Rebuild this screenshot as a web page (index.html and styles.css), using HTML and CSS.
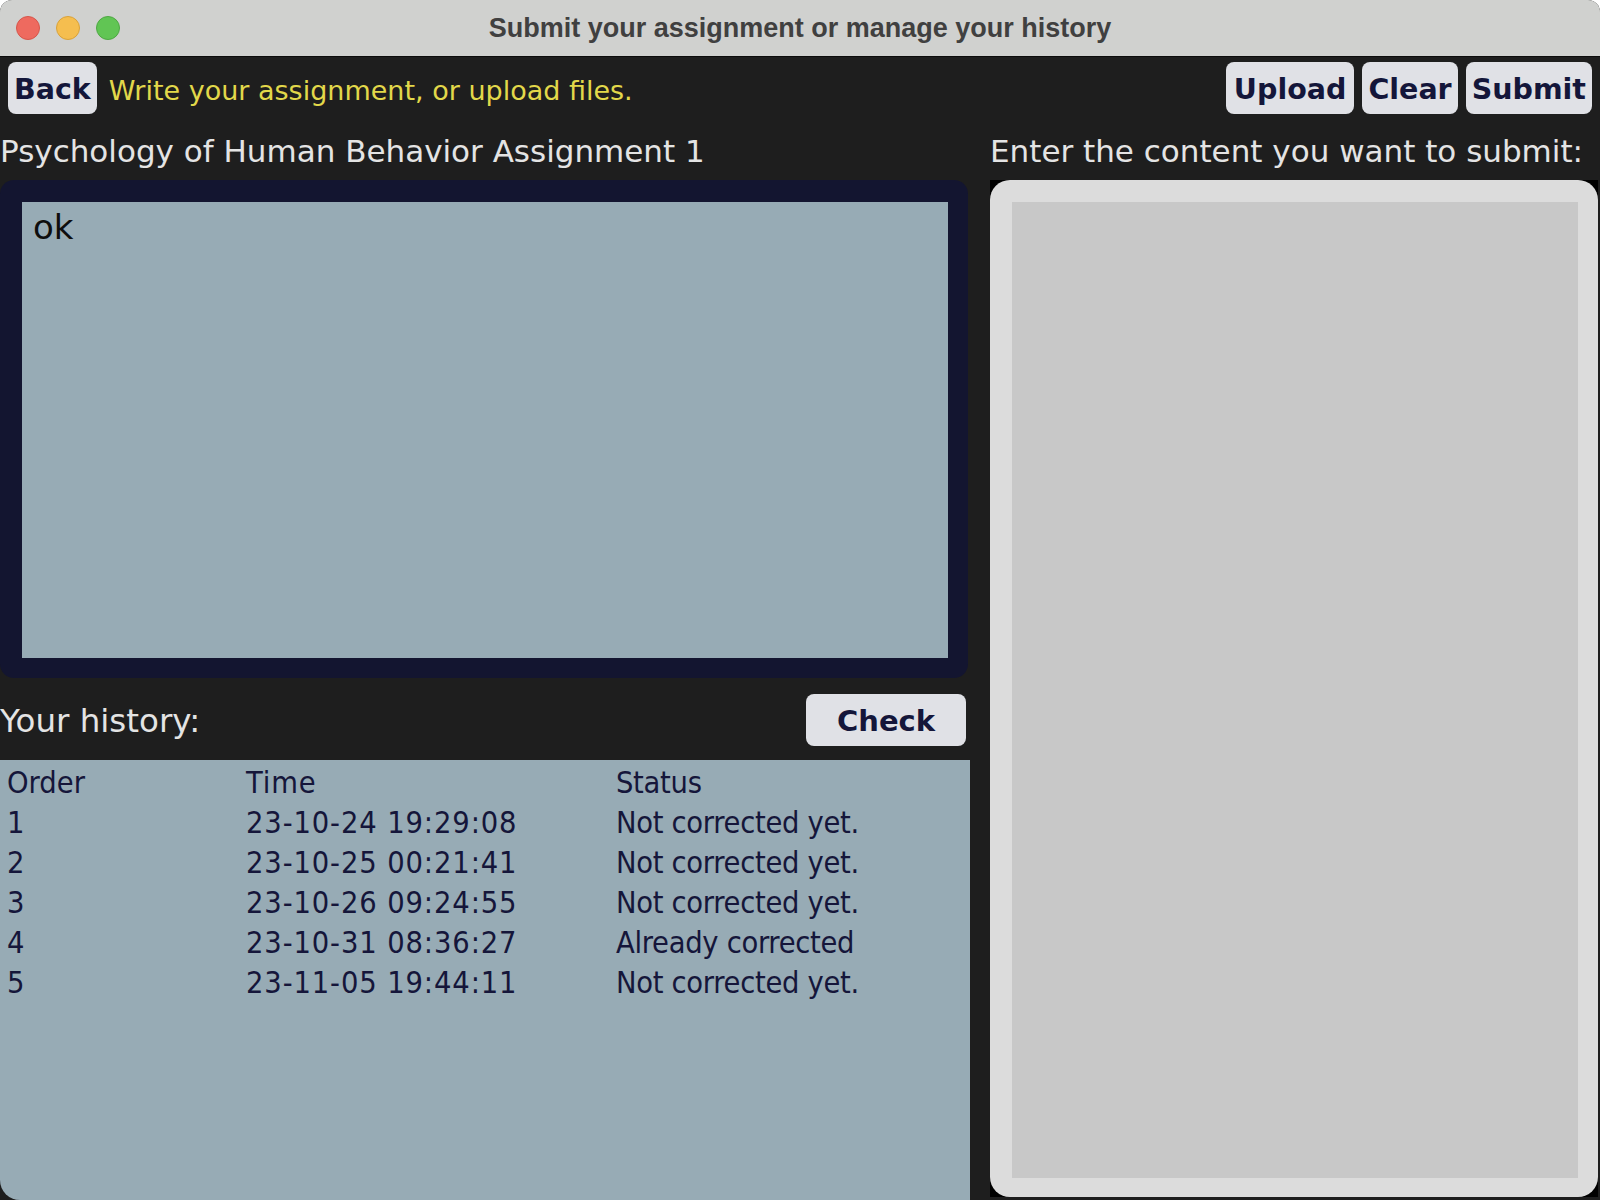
FILE: index.html
```html
<!DOCTYPE html>
<html>
<head>
<meta charset="utf-8">
<title>Submit your assignment or manage your history</title>
<link rel="stylesheet" href="styles.css">
</head>
<body>
<div class="window">
  <div class="titlebar">
    <div class="lights">
      <span class="light red"></span>
      <span class="light yellow"></span>
      <span class="light green"></span>
    </div>
    <div class="title">Submit your assignment or manage your history</div>
    <div></div>
  </div>
  <div class="toolbar">
    <button class="btn">Back</button>
    <span class="hint">Write your assignment, or upload files.</span>
    <div class="actions">
      <button class="btn upload">Upload</button>
      <button class="btn">Clear</button>
      <button class="btn">Submit</button>
    </div>
  </div>
  <div class="main">
    <div class="left">
      <div class="label">Psychology of Human Behavior Assignment 1</div>
      <div class="assignment"><div class="assignment-inner">ok</div></div>
      <div class="history-head">
        <span class="label history-label">Your history:</span>
        <button class="btn check">Check</button>
      </div>
      <div class="history">
        <div class="row"><span>Order</span><span class="time">Time</span><span class="status">Status</span></div>
        <div class="row"><span>1</span><span class="time">23-10-24 19:29:08</span><span class="status">Not corrected yet.</span></div>
        <div class="row"><span>2</span><span class="time">23-10-25 00:21:41</span><span class="status">Not corrected yet.</span></div>
        <div class="row"><span>3</span><span class="time">23-10-26 09:24:55</span><span class="status">Not corrected yet.</span></div>
        <div class="row"><span>4</span><span class="time">23-10-31 08:36:27</span><span class="status">Already corrected</span></div>
        <div class="row"><span>5</span><span class="time">23-11-05 19:44:11</span><span class="status">Not corrected yet.</span></div>
      </div>
    </div>
    <div class="right">
      <div class="label">Enter the content you want to submit:</div>
      <div class="editor-wrap">
        <div class="editor"><div class="editor-inner"></div></div>
      </div>
    </div>
  </div>
</div>
</body>
</html>
```

FILE: styles.css
```css
* { box-sizing: border-box; }
html, body { margin: 0; padding: 0; }
body {
  width: 1600px;
  height: 1200px;
  overflow: hidden;
  background: #ffffff;
  font-family: "DejaVu Sans", sans-serif;
}
.window {
  width: 1600px;
  height: 1200px;
  background: #1e1e1e;
  border-radius: 12px 12px 0 0;
  overflow: hidden;
  display: flex;
  flex-direction: column;
}
.titlebar {
  flex: none;
  height: 57px;
  background: #d0d1cf;
  border-bottom: 1px solid #0c0c0c;
  display: grid;
  grid-template-columns: 1fr auto 1fr;
  align-items: center;
}
.lights {
  display: flex;
  gap: 16px;
  padding-left: 16px;
}
.light {
  width: 24px;
  height: 24px;
  border-radius: 50%;
}
.red { background: #ee6a5f; border: 1px solid #d6564b; }
.yellow { background: #f5be4f; border: 1px solid #d9a23a; }
.green { background: #61c554; border: 1px solid #4ea843; }
.title {
  font-family: "Liberation Sans", Arial, sans-serif;
  font-weight: bold;
  font-size: 27px;
  color: #404040;
  padding-top: 1px;
}
.toolbar {
  flex: none;
  height: 57px;
  padding: 5px 8px 0 8px;
  display: flex;
  align-items: flex-start;
  gap: 12px;
}
.btn {
  font-family: "DejaVu Sans", sans-serif;
  font-weight: bold;
  font-size: 28.5px;
  color: #14163a;
  background: #e0e1e6;
  border: none;
  border-radius: 8px;
  height: 52px;
  padding: 3px 6px 0 6px;
  margin: 0;
}
.upload { padding: 3px 8px 0 8px; }
.hint {
  font-size: 27px;
  color: #e2d84a;
  line-height: 52px;
  padding-top: 3px;
}
.actions {
  margin-left: auto;
  display: flex;
  gap: 8px;
}
.main {
  flex: 1;
  display: flex;
  gap: 20px;
}
.left {
  width: 970px;
  display: flex;
  flex-direction: column;
}
.right {
  width: 608px;
  display: flex;
  flex-direction: column;
}
.label {
  font-size: 31px;
  line-height: 36px;
  color: #e4e4e4;
  height: 66px;
  padding-top: 19px;
  white-space: nowrap;
}
.assignment {
  width: 968px;
  height: 498px;
  background: #131530;
  border-radius: 14px;
  padding: 22px 20px 20px 22px;
}
.assignment-inner {
  height: 100%;
  background: #97abb5;
  padding: 5px 11px;
  font-size: 34px;
  line-height: 40px;
  color: #0e0e0e;
}
.history-head {
  height: 82px;
  display: flex;
  align-items: flex-start;
  justify-content: space-between;
  padding-top: 16px;
}
.history-label {
  height: auto;
  padding-top: 0;
  margin-top: 9px;
  font-size: 32.5px;
}
.check {
  width: 160px;
  margin-right: 4px;
  font-size: 29px;
  padding-top: 1px;
}
.history {
  flex: 1;
  background: #97abb5;
  border-bottom-left-radius: 20px;
  padding: 3px 0 0 7px;
  font-size: 30.5px;
  font-stretch: condensed;
  color: #15163a;
}
.row {
  display: grid;
  grid-template-columns: 239px 370px 1fr;
  line-height: 40px;
  white-space: nowrap;
}
.time { letter-spacing: 0.88px; }
.status { letter-spacing: -0.3px; }
.editor-wrap {
  height: 1017px;
  background: #000000;
}
.editor {
  height: 100%;
  background: #dcdcdc;
  border-radius: 20px;
  padding: 22px 20px 19px 22px;
}
.editor-inner {
  height: 100%;
  background: #c8c8c8;
}
```
